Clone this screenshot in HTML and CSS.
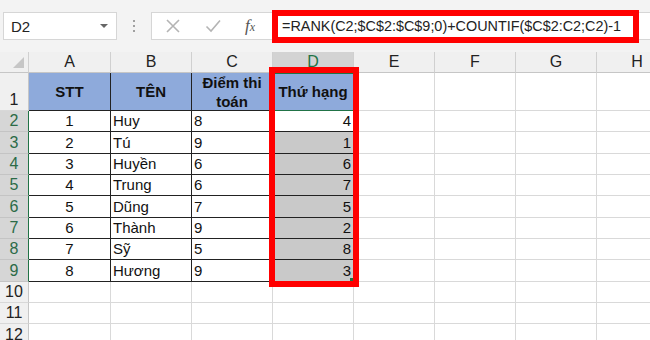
FILE: index.html
```html
<!DOCTYPE html>
<html lang="vi">
<head>
    <meta charset="UTF-8">
    <title>Xếp hạng</title>
    <link rel="stylesheet" href="styles.css">
</head>
<body>
    <div class="toolbar">
        <div class="namebox">
            <span>D2</span>
            <span class="caret"></span>
        </div>
        <div class="grip"><i></i><i></i><i></i></div>
        <div class="formula">
            <svg class="icon" width="16" height="16" viewBox="0 0 16 16"><path d="M2 2L14 14M14 2L2 14" stroke="#b4b4b4" stroke-width="1.6" fill="none"/></svg>
            <svg class="icon" width="16" height="16" viewBox="0 0 16 16"><path d="M1.5 8.5L6 13L15 2.5" stroke="#b4b4b4" stroke-width="1.6" fill="none"/></svg>
            <span class="fx">f<small>x</small></span>
            <div class="expr">=RANK(C2;$C$2:$C$9;0)+COUNTIF($C$2:C2;C2)-1</div>
        </div>
    </div>

    <div class="sheet">
        <div class="corner"></div>
        <div class="ch">A</div><div class="ch">B</div><div class="ch">C</div><div class="ch sel">D</div><div class="ch">E</div><div class="ch">F</div><div class="ch">G</div><div class="ch">H</div>

        <div class="rh">1</div>
        <div class="c t hd">STT</div><div class="c t hd">TÊN</div><div class="c t hd">Điểm thi toán</div><div class="c t hd last top">Thứ hạng</div>
        <div class="c"></div><div class="c"></div><div class="c"></div><div class="c"></div>

        <div class="rh sel">2</div>
        <div class="c t ctr">1</div><div class="c t">Huy</div><div class="c t">8</div><div class="c t rt last">4</div>
        <div class="c"></div><div class="c"></div><div class="c"></div><div class="c"></div>

        <div class="rh sel">3</div>
        <div class="c t ctr">2</div><div class="c t">Tú</div><div class="c t">9</div><div class="c t rt last shade">1</div>
        <div class="c"></div><div class="c"></div><div class="c"></div><div class="c"></div>

        <div class="rh sel">4</div>
        <div class="c t ctr">3</div><div class="c t">Huyền</div><div class="c t">6</div><div class="c t rt last shade">6</div>
        <div class="c"></div><div class="c"></div><div class="c"></div><div class="c"></div>

        <div class="rh sel">5</div>
        <div class="c t ctr">4</div><div class="c t">Trung</div><div class="c t">6</div><div class="c t rt last shade">7</div>
        <div class="c"></div><div class="c"></div><div class="c"></div><div class="c"></div>

        <div class="rh sel">6</div>
        <div class="c t ctr">5</div><div class="c t">Dũng</div><div class="c t">7</div><div class="c t rt last shade">5</div>
        <div class="c"></div><div class="c"></div><div class="c"></div><div class="c"></div>

        <div class="rh sel">7</div>
        <div class="c t ctr">6</div><div class="c t">Thành</div><div class="c t">9</div><div class="c t rt last shade">2</div>
        <div class="c"></div><div class="c"></div><div class="c"></div><div class="c"></div>

        <div class="rh sel">8</div>
        <div class="c t ctr">7</div><div class="c t">Sỹ</div><div class="c t">5</div><div class="c t rt last shade">8</div>
        <div class="c"></div><div class="c"></div><div class="c"></div><div class="c"></div>

        <div class="rh sel">9</div>
        <div class="c t ctr">8</div><div class="c t">Hương</div><div class="c t">9</div><div class="c t rt last shade end">3</div>
        <div class="c"></div><div class="c"></div><div class="c"></div><div class="c"></div>

        <div class="rh">10</div>
        <div class="c"></div><div class="c"></div><div class="c"></div><div class="c"></div>
        <div class="c"></div><div class="c"></div><div class="c"></div><div class="c"></div>

        <div class="rh">11</div>
        <div class="c"></div><div class="c"></div><div class="c"></div><div class="c"></div>
        <div class="c"></div><div class="c"></div><div class="c"></div><div class="c"></div>

        <div class="rh">12</div>
        <div class="c"></div><div class="c"></div><div class="c"></div><div class="c"></div>
        <div class="c"></div><div class="c"></div><div class="c"></div><div class="c"></div>

        <div class="mark"></div>
    </div>
</body>
</html>
```

FILE: styles.css
```css
body { margin: 0; font-family: "Liberation Sans", Arial, sans-serif; background: #f3f3f3; overflow: hidden; }

.toolbar { height: 52px; box-sizing: border-box; padding: 12px 0 0 3px; display: flex; align-items: flex-start; }
.namebox { width: 114px; height: 28px; box-sizing: border-box; background: #fff; border: 1px solid #d6d6d6; display: flex; align-items: center; justify-content: space-between; padding: 0 8px 0 7px; font-size: 15px; color: #222; }
.caret { width: 0; height: 0; border-left: 4px solid transparent; border-right: 4px solid transparent; border-top: 4px solid #666; }
.grip { width: 34px; height: 28px; display: flex; flex-direction: column; align-items: center; justify-content: center; gap: 3px; }
.grip i { width: 2px; height: 2px; background: #a0a0a0; }
.formula { flex: 1; height: 28px; box-sizing: border-box; background: #fff; border: 1px solid #d6d6d6; border-right: none; display: flex; align-items: center; padding-left: 13px; }
.icon { margin-right: 24px; }
.fx { font-family: "Liberation Serif", serif; font-style: italic; font-size: 17px; color: #555; width: 16px; margin-right: 11px; }
.fx small { font-size: 12px; }
.expr { flex: none; width: 367px; height: 33px; box-sizing: border-box; border: 6px solid #ff0000; background: #fff; display: flex; align-items: center; padding-left: 4px; font-size: 14.4px; color: #222; white-space: nowrap; }

.sheet { position: relative; background: #fff; display: grid; grid-template-columns: 29px 82px repeat(7, 81px); grid-template-rows: 21px 38px repeat(11, 21.33px); }
.sheet > div { box-sizing: border-box; }
.corner { background: #f0f0f0; border-right: 1px solid #d0d0d0; border-bottom: 1px solid #c6c6c6; position: relative; }
.corner::after { content: ""; position: absolute; right: 4px; bottom: 4px; border-left: 11px solid transparent; border-bottom: 11px solid #c6c6c6; }
.ch { background: #f0f0f0; border-right: 1px solid #d0d0d0; border-bottom: 1px solid #c6c6c6; display: flex; align-items: center; justify-content: center; font-size: 16px; color: #222; }
.ch.sel { background: #d3d3d3; color: #217346; border-bottom: 2px solid #217346; }
.rh { background: #f0f0f0; border-right: 1px solid #c6c6c6; border-bottom: 1px solid #d8d8d8; display: flex; align-items: flex-end; justify-content: center; font-size: 16px; color: #222; line-height: 20px; }
.rh.sel { background: #d6d6d6; color: #2b6b47; border-right: 1px solid #217346; border-bottom-color: #c4c4c4; }

.c { border-right: 1px solid #d9d9d9; border-bottom: 1px solid #d9d9d9; display: flex; align-items: flex-end; padding: 0 2px 1px; font-size: 15px; color: #111; white-space: nowrap; overflow: hidden; line-height: 18px; }
.c.t { border-color: #222; }
.c.hd { background: #8eaadb; font-weight: bold; white-space: normal; text-align: center; justify-content: center; align-items: center; line-height: 19px; padding: 0 4px; }
.c.ctr { justify-content: center; }
.c.rt { justify-content: flex-end; }
.c.shade { background: #c9c9c9; }
.c.last { border-right: 1px solid #217346; }
.c.top { box-shadow: inset 0 1px 0 #217346; border-bottom-color: #217346; }
.c.end { position: relative; border-bottom-color: #fff; }
.c.end::after { content: ""; position: absolute; right: -1px; bottom: -1px; width: 4px; height: 4px; background: #217346; }

.mark { position: absolute; left: 269px; top: 15px; width: 90px; height: 220px; border: 6px solid #ff0000; pointer-events: none; }
```
